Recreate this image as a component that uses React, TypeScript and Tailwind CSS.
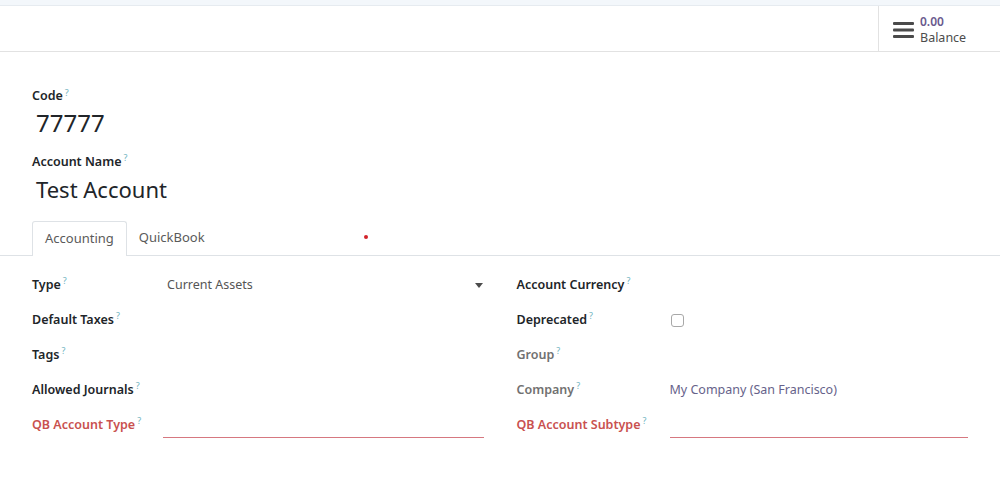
const font = { fontFamily: '"Noto Sans", "Open Sans", sans-serif' };

function Q() {
  return <sup className="ml-[2px] text-[9px] font-normal text-[#6fb3c0]">?</sup>;
}

function Label({ text, tone = 'dark', width }: { text: string; tone?: 'dark' | 'muted' | 'red'; width: string }) {
  const color = tone === 'red' ? 'text-[#c9514f]' : tone === 'muted' ? 'text-[#717171]' : 'text-[#212529]';
  return (
    <div className={`${width} shrink-0 text-[12.5px] font-semibold ${color}`}>
      {text}
      <Q />
    </div>
  );
}

function Row({ children }: { children: React.ReactNode }) {
  return <div className="flex h-[35px] items-center">{children}</div>;
}

export default function App() {
  return (
    <div className="h-[486px] w-[1000px] overflow-hidden bg-white" style={font}>
      <div className="h-[6px] border-b border-[#e6ebf0] bg-[#f3f7fb]" />
      <div className="flex h-[46px] justify-end border-b border-[#e2e2e2]">
        <div className="flex w-[122px] items-center gap-[6px] border-l border-[#e2e2e2] pl-[14px] pt-[3px]">
          <svg width="21" height="18" viewBox="0 0 21 18" aria-hidden="true">
            <rect x="0" y="1" width="21" height="3" rx="1" fill="#4a4a4a" />
            <rect x="0" y="7.5" width="21" height="3" rx="1" fill="#4a4a4a" />
            <rect x="0" y="14" width="21" height="3" rx="1" fill="#4a4a4a" />
          </svg>
          <div className="flex flex-col">
            <span className="text-[12px] leading-[16px] font-semibold text-[#6a5a8e]">0.00</span>
            <span className="text-[12.5px] leading-[16px] text-[#4c4c4c]">Balance</span>
          </div>
        </div>
      </div>

      <div className="px-[32px] pt-[35px]">
        <div className="text-[12.5px] font-semibold text-[#212529]">
          Code
          <Q />
        </div>
        <div className="mt-[1px] pl-[4px] text-[24px] leading-[32px] text-[#212529]">77777</div>
        <div className="mt-[14px] text-[12.5px] font-semibold text-[#212529]">
          Account Name
          <Q />
        </div>
        <div className="mt-[1px] pl-[4px] text-[22px] leading-[32px] text-[#212529]">Test Account</div>
      </div>

      <div className="mt-[17px] flex h-[34px] items-end border-b border-[#dee2e6] pl-[32px]">
        <div className="-mb-px flex h-[35px] items-center rounded-t-[3px] border border-b-0 border-[#dee2e6] bg-white px-[12px] text-[13px] text-[#5a5a5a]">
          Accounting
        </div>
        <div className="flex h-[34px] items-center px-[12px] text-[13px] text-[#5a5a5a]">QuickBook</div>
        <span className="mb-[16px] ml-[147px] h-[4px] w-[4px] rounded-full bg-[#d2232a]" />
      </div>

      <div className="flex gap-[33px] px-[32px] pt-[12px]">
        <div className="w-[452px]">
          <Row>
            <Label text="Type" width="w-[131px]" />
            <div className="flex flex-1 items-center justify-between pl-[4px] pr-[1px] text-[12.5px] text-[#555]">
              <span>Current Assets</span>
              <span className="h-0 w-0 border-x-[4px] border-t-[5px] border-x-transparent border-t-[#4c4c4c]" />
            </div>
          </Row>
          <Row>
            <Label text="Default Taxes" width="w-[131px]" />
          </Row>
          <Row>
            <Label text="Tags" width="w-[131px]" />
          </Row>
          <Row>
            <Label text="Allowed Journals" width="w-[131px]" />
          </Row>
          <Row>
            <Label text="QB Account Type" tone="red" width="w-[131px]" />
            <div className="mt-[24px] h-[1px] flex-1 bg-[#d67880]" />
          </Row>
        </div>
        <div className="w-[452px]">
          <Row>
            <Label text="Account Currency" width="w-[153px]" />
          </Row>
          <Row>
            <Label text="Deprecated" width="w-[153px]" />
            <span className="ml-[1px] h-[13px] w-[13px] rounded-[3px] border border-[#a8a8a8] bg-white" />
          </Row>
          <Row>
            <Label text="Group" tone="muted" width="w-[153px]" />
          </Row>
          <Row>
            <Label text="Company" tone="muted" width="w-[153px]" />
            <span className="text-[12.5px] text-[#66628a]">My Company (San Francisco)</span>
          </Row>
          <Row>
            <Label text="QB Account Subtype" tone="red" width="w-[153px]" />
            <div className="mt-[24px] h-[1px] flex-1 bg-[#d67880]" />
          </Row>
        </div>
      </div>
    </div>
  );
}
